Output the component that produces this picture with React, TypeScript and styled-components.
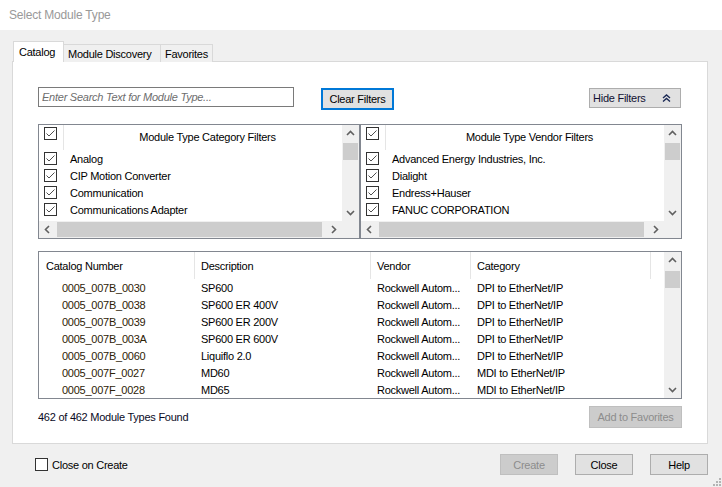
import React from "react";
import styled, { createGlobalStyle } from "styled-components";

const GlobalStyle = createGlobalStyle`
  html, body { margin: 0; padding: 0; }
  body {
    background: #f0f0f0;
    font-family: "Liberation Sans", Arial, sans-serif;
    font-size: 11px;
    letter-spacing: -0.25px;
    color: #000;
  }
  * { box-sizing: border-box; }
`;

const Window = styled.div`
  width: 722px;
  height: 487px;
  background: #f0f0f0;
  display: flex;
  flex-direction: column;
  position: relative;
  overflow: hidden;
`;

const TitleBar = styled.div`
  height: 30px;
  flex: 0 0 30px;
  background: #fff;
  display: flex;
  align-items: center;
  padding-left: 9px;
  color: #999999;
  font-size: 12px;
  letter-spacing: -0.2px;
`;

const Body = styled.div`
  flex: 1;
  display: flex;
  flex-direction: column;
  padding: 11px 14px 0 12px;
`;

const Tabs = styled.div`
  display: flex;
  align-items: flex-start;
  height: 21px;
  margin-left: 1px;
`;

const Tab = styled.div<{ $active?: boolean; $w: number }>`
  width: ${(p) => p.$w}px;
  height: ${(p) => (p.$active ? 21 : 18)}px;
  margin-top: ${(p) => (p.$active ? 0 : 3)}px;
  border: 1px solid #d9d9d9;
  border-bottom: none;
  border-left: ${(p) => (p.$active ? "1px solid #d9d9d9" : "none")};
  background: ${(p) => (p.$active ? "#fff" : "#f0f0f0")};
  padding-left: ${(p) => (p.$active ? 5 : 4)}px;
  padding-top: ${(p) => (p.$active ? 0 : 1)}px;
  display: flex;
  align-items: center;
  position: relative;
  z-index: ${(p) => (p.$active ? 1 : 0)};
  white-space: nowrap;
`;

const Panel = styled.div`
  margin-top: -1px;
  background: #fff;
  border: 1px solid #d9d9d9;
  padding: 25px 25px 15px 25px;
  display: flex;
  flex-direction: column;
`;

const SearchRow = styled.div`
  display: flex;
  align-items: flex-start;
  height: 22px;
`;

const SearchInput = styled.input`
  width: 256px;
  height: 20px;
  border: 1px solid #7a7a7a;
  padding: 0 3px;
  font: inherit;
  letter-spacing: inherit;
  outline: none;
  background: #fff;
  &::placeholder {
    color: #6d6d6d;
    font-style: italic;
  }
`;

const Btn = styled.button<{ $variant?: "default" | "focused" | "disabled"; $w: number; $h?: number }>`
  font: inherit;
  letter-spacing: inherit;
  width: ${(p) => p.$w}px;
  height: ${(p) => p.$h ?? 21}px;
  padding: 0;
  background: ${(p) => (p.$variant === "disabled" ? "#cccccc" : "#e1e1e1")};
  border: ${(p) =>
    p.$variant === "focused"
      ? "2px solid #0078d7"
      : p.$variant === "disabled"
      ? "1px solid #bfbfbf"
      : "1px solid #adadad"};
  color: ${(p) => (p.$variant === "disabled" ? "#8c8c8c" : "#000")};
  display: flex;
  align-items: center;
  justify-content: center;
  white-space: nowrap;
  cursor: default;
`;

const ClearBtn = styled(Btn)`
  margin-left: 27px;
  margin-top: 1px;
`;

const HideBtn = styled(Btn)`
  margin-left: auto;
  margin-top: 1px;
  margin-right: 1px;
  justify-content: space-between;
  padding: 0 9px 0 3px;
  color: #111133;
`;

const FilterRow = styled.div`
  display: flex;
  margin-top: 15px;
`;

const FilterBox = styled.div`
  flex: 0 0 322px;
  height: 115px;
  border: 1px solid #828790;
  background: #fff;
  display: grid;
  grid-template-columns: 1fr 17px;
  grid-template-rows: 1fr 17px;
`;

const FilterList = styled.div`
  overflow: hidden;
`;

const FilterHeader = styled.div`
  height: 25px;
  display: flex;
`;

const HeaderCheckCell = styled.div`
  width: 25px;
  border-right: 1px solid #e5e5e5;
  padding: 2px 0 0 5px;
`;

const HeaderTitle = styled.div`
  flex: 1;
  text-align: center;
  line-height: 25px;
  padding-left: 9px;
  white-space: nowrap;
`;

const FilterItem = styled.div`
  height: 17px;
  display: flex;
  align-items: center;
  padding-left: 5px;
  white-space: nowrap;
`;

const ItemText = styled.span`
  margin-left: 13px;
`;

const CheckBox = styled.span`
  width: 13px;
  height: 13px;
  flex: 0 0 13px;
  border: 1px solid #333;
  background: #fff;
  display: inline-flex;
  align-items: center;
  justify-content: center;
`;

const VScroll = styled.div`
  background: #f0f0f0;
  display: flex;
  flex-direction: column;
  overflow: hidden;
`;

const HScroll = styled.div`
  background: #f0f0f0;
  display: flex;
`;

const Corner = styled.div`
  background: #f0f0f0;
`;

const ArrowBtn = styled.div`
  flex: 0 0 17px;
  width: 17px;
  height: 17px;
  display: flex;
  align-items: center;
  justify-content: center;
`;

const VTrack = styled.div`
  flex: 1;
  display: flex;
  flex-direction: column;
`;

const VThumb = styled.div<{ $offset: number; $size: number }>`
  margin: ${(p) => p.$offset}px 1px 0 1px;
  height: ${(p) => p.$size}px;
  background: #cdcdcd;
`;

const HTrack = styled.div`
  flex: 1;
  display: flex;
`;

const HThumb = styled.div<{ $size: number }>`
  margin: 1px 0 1px 1px;
  width: ${(p) => p.$size}px;
  background: #cdcdcd;
`;

const TableBox = styled.div`
  margin-top: 12px;
  height: 148px;
  border: 1px solid #828790;
  background: #fff;
  display: grid;
  grid-template-columns: 1fr 17px;
`;

const TableContent = styled.div`
  overflow: hidden;
`;

const cols = "156px 176px 100px 180px 1fr";

const HeaderRow = styled.div`
  height: 27px;
  display: grid;
  grid-template-columns: ${cols};
`;

const HeaderCell = styled.div<{ $pad?: number; $last?: boolean }>`
  padding-left: ${(p) => p.$pad ?? 6}px;
  display: flex;
  align-items: center;
  border-right: ${(p) => (p.$last ? "none" : "1px solid #e5e5e5")};
  white-space: nowrap;
`;

const Row = styled.div`
  height: 17px;
  display: grid;
  grid-template-columns: ${cols};
  align-items: center;
`;

const Cell = styled.div<{ $pad?: number; $color?: string }>`
  padding-left: ${(p) => p.$pad ?? 6}px;
  color: ${(p) => p.$color ?? "#000"};
  white-space: nowrap;
  overflow: hidden;
`;

const StatusRow = styled.div`
  margin-top: 7px;
  height: 22px;
  display: flex;
  align-items: center;
  justify-content: space-between;
`;

const StatusText = styled.span`
  color: #0a0a1e;
`;

const Footer = styled.div`
  margin-top: 10px;
  height: 21px;
  display: flex;
  align-items: center;
  gap: 17px;
`;

const CloseOnCreate = styled.label`
  display: flex;
  align-items: center;
  margin-left: 23px;
  margin-right: auto;
  gap: 4px;
`;

const Grip = styled.div`
  position: absolute;
  right: 1px;
  bottom: 1px;
  width: 10px;
  height: 10px;
`;

const Check = ({ checked = true }: { checked?: boolean }) => (
  <CheckBox>
    {checked && (
      <svg width="11" height="11" viewBox="0 0 11 11">
        <polyline points="1.5,5.5 4,8 9.5,2.5" fill="none" stroke="#4f4f4f" strokeWidth="1" />
      </svg>
    )}
  </CheckBox>
);

const Chevron = ({ dir }: { dir: "up" | "down" | "left" | "right" }) => {
  const pts: Record<string, string> = {
    up: "1,6 4.5,2.5 8,6",
    down: "1,3 4.5,6.5 8,3",
    left: "6,1 2.5,4.5 6,8",
    right: "3,1 6.5,4.5 3,8",
  };
  return (
    <svg width="9" height="9" viewBox="0 0 9 9">
      <polyline points={pts[dir]} fill="none" stroke="#606060" strokeWidth="1.6" />
    </svg>
  );
};

const DoubleUp = () => (
  <svg width="9" height="8" viewBox="0 0 9 8">
    <polyline points="1,4 4.5,1 8,4" fill="none" stroke="#1c2a55" strokeWidth="1.4" />
    <polyline points="1,7.5 4.5,4.5 8,7.5" fill="none" stroke="#1c2a55" strokeWidth="1.4" />
  </svg>
);

const VScrollBar = ({ offset, size }: { offset: number; size: number }) => (
  <VScroll>
    <ArrowBtn>
      <Chevron dir="up" />
    </ArrowBtn>
    <VTrack>
      <VThumb $offset={offset} $size={size} />
    </VTrack>
    <ArrowBtn>
      <Chevron dir="down" />
    </ArrowBtn>
  </VScroll>
);

const HScrollBar = ({ size }: { size: number }) => (
  <HScroll>
    <ArrowBtn>
      <Chevron dir="left" />
    </ArrowBtn>
    <HTrack>
      <HThumb $size={size} />
    </HTrack>
    <ArrowBtn>
      <Chevron dir="right" />
    </ArrowBtn>
  </HScroll>
);

const FilterPanel = ({ title, items }: { title: string; items: string[] }) => (
  <FilterBox>
    <FilterList>
      <FilterHeader>
        <HeaderCheckCell>
          <Check />
        </HeaderCheckCell>
        <HeaderTitle>{title}</HeaderTitle>
      </FilterHeader>
      {items.map((it) => (
        <FilterItem key={it}>
          <Check />
          <ItemText>{it}</ItemText>
        </FilterItem>
      ))}
    </FilterList>
    <VScrollBar offset={1} size={17} />
    <HScrollBar size={265} />
    <Corner />
  </FilterBox>
);

const rows = [
  ["0005_007B_0030", "SP600", "Rockwell Autom...", "DPI to EtherNet/IP"],
  ["0005_007B_0038", "SP600 ER 400V", "Rockwell Autom...", "DPI to EtherNet/IP"],
  ["0005_007B_0039", "SP600 ER 200V", "Rockwell Autom...", "DPI to EtherNet/IP"],
  ["0005_007B_003A", "SP600 ER 600V", "Rockwell Autom...", "DPI to EtherNet/IP"],
  ["0005_007B_0060", "Liquiflo 2.0", "Rockwell Autom...", "DPI to EtherNet/IP"],
  ["0005_007F_0027", "MD60", "Rockwell Autom...", "MDI to EtherNet/IP"],
  ["0005_007F_0028", "MD65", "Rockwell Autom...", "MDI to EtherNet/IP"],
];

export default function App() {
  return (
    <>
      <GlobalStyle />
      <Window>
        <TitleBar>Select Module Type</TitleBar>
        <Body>
          <Tabs>
            <Tab $active $w={51}>Catalog</Tab>
            <Tab $w={97}>Module Discovery</Tab>
            <Tab $w={52}>Favorites</Tab>
          </Tabs>
          <Panel>
            <SearchRow>
              <SearchInput placeholder="Enter Search Text for Module Type..." />
              <ClearBtn $variant="focused" $w={73} $h={22}>
                Clear Filters
              </ClearBtn>
              <HideBtn $w={92} $h={20}>
                <span>Hide Filters</span>
                <DoubleUp />
              </HideBtn>
            </SearchRow>
            <FilterRow>
              <FilterPanel
                title="Module Type Category Filters"
                items={["Analog", "CIP Motion Converter", "Communication", "Communications Adapter"]}
              />
              <FilterPanel
                title="Module Type Vendor Filters"
                items={["Advanced Energy Industries, Inc.", "Dialight", "Endress+Hauser", "FANUC CORPORATION"]}
              />
            </FilterRow>
            <TableBox>
              <TableContent>
                <HeaderRow>
                  <HeaderCell $pad={7}>Catalog Number</HeaderCell>
                  <HeaderCell>Description</HeaderCell>
                  <HeaderCell>Vendor</HeaderCell>
                  <HeaderCell>Category</HeaderCell>
                  <HeaderCell $last />
                </HeaderRow>
                {rows.map((r) => (
                  <Row key={r[0]}>
                    <Cell $pad={23} $color="#2e2206">{r[0]}</Cell>
                    <Cell>{r[1]}</Cell>
                    <Cell>{r[2]}</Cell>
                    <Cell>{r[3]}</Cell>
                    <Cell />
                  </Row>
                ))}
              </TableContent>
              <VScrollBar offset={2} size={17} />
            </TableBox>
            <StatusRow>
              <StatusText>462 of 462 Module Types Found</StatusText>
              <Btn $variant="disabled" $w={93} $h={22}>
                Add to Favorites
              </Btn>
            </StatusRow>
          </Panel>
          <Footer>
            <CloseOnCreate>
              <Check checked={false} />
              <span>Close on Create</span>
            </CloseOnCreate>
            <Btn $variant="disabled" $w={58}>
              Create
            </Btn>
            <Btn $w={58}>Close</Btn>
            <Btn $w={58}>Help</Btn>
          </Footer>
        </Body>
        <Grip>
          <svg width="10" height="10" viewBox="0 0 10 10">
            {[
              [8, 2],
              [8, 5],
              [5, 5],
              [8, 8],
              [5, 8],
              [2, 8],
            ].map(([x, y]) => (
              <rect key={`${x}-${y}`} x={x} y={y} width="2" height="2" fill="#b4b4b4" />
            ))}
          </svg>
        </Grip>
      </Window>
    </>
  );
}
